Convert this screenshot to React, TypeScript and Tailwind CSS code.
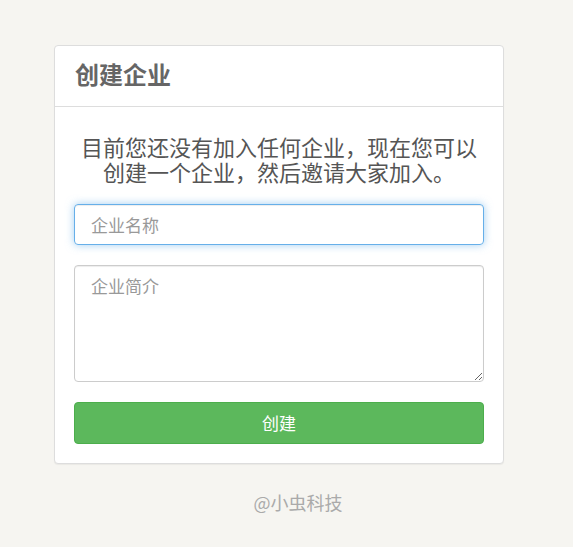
export default function App() {
  return (
    <div className="min-h-[547px] bg-[#f6f5f1] pt-[45px] font-['Noto_Sans_CJK_SC',sans-serif]">
      <div className="ml-[54px] w-[450px] rounded border border-[#dddddd] bg-white shadow-[0_1px_1px_rgba(0,0,0,0.05)]">
        <div className="flex h-[61px] items-center border-b border-[#dddddd] px-5">
          <h3 className="font-['Liberation_Serif','Noto_Sans_CJK_SC',serif] text-[24px] font-bold text-[#666666]">创建企业</h3>
        </div>
        <div className="flex flex-col p-[19px] pt-[29px]">
          <p className="mb-[18px] text-center font-['Liberation_Serif','Noto_Sans_CJK_SC',serif] text-[22px] leading-[25px] text-[#555555]">
            目前您还没有加入任何企业，现在您可以
            <br />
            创建一个企业，然后邀请大家加入。
          </p>
          <input
            type="text"
            placeholder="企业名称"
            className="h-[41px] w-full rounded border border-[#66afe9] px-4 text-[17px] text-[#555] shadow-[inset_0_1px_1px_rgba(0,0,0,0.075),0_0_8px_rgba(102,175,233,0.6)] outline-none placeholder:text-[#999999]"
          />
          <textarea
            placeholder="企业简介"
            className="mt-5 h-[117px] w-full rounded border border-[#cccccc] px-4 py-[7px] text-[17px] text-[#555] shadow-[inset_0_1px_1px_rgba(0,0,0,0.075)] outline-none placeholder:text-[#999999]"
          />
          <button
            type="button"
            className="mt-5 h-[42px] w-full rounded border border-[#4cae4c] bg-[#5cb85c] text-[17px] text-white"
          >
            创建
          </button>
        </div>
      </div>
      <p className="mt-[25px] pl-[23px] text-center text-[18px] text-[#aaaaaa]">@小虫科技</p>
    </div>
  );
}
